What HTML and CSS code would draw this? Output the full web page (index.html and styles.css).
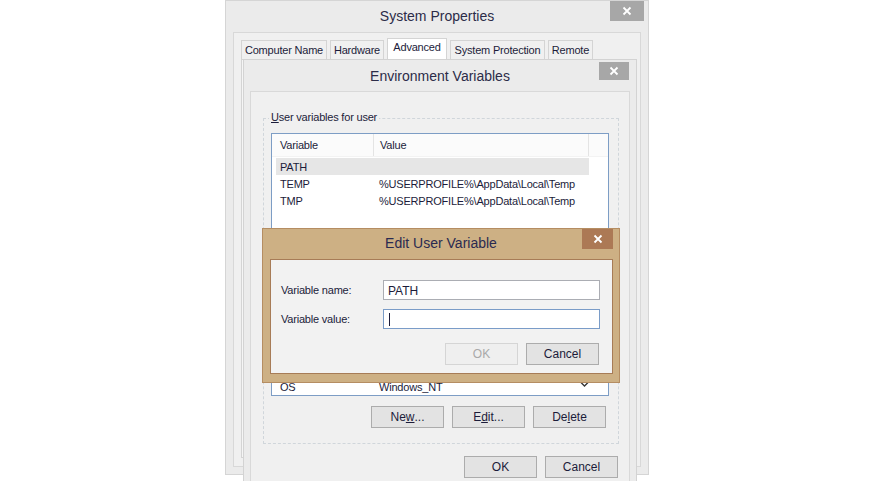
FILE: index.html
```html
<!DOCTYPE html>
<html>
<head>
<meta charset="utf-8">
<link rel="stylesheet" href="styles.css">
</head>
<body>
<div class="desktop">
  <div class="win sys">
    <div class="titlebar">
      <span></span>
      <span class="title">System Properties</span>
      <span class="close gray"><svg width="10" height="10" viewBox="0 0 10 10"><path d="M1.5 1.5L8.5 8.5M8.5 1.5L1.5 8.5" stroke="#fff" stroke-width="1.8"/></svg></span>
    </div>
    <div class="sys-client">
      <div class="tabs">
        <span class="tab t1">Computer Name</span>
        <span class="tab t2">Hardware</span>
        <span class="tab t3 active">Advanced</span>
        <span class="tab t4">System Protection</span>
        <span class="tab t5">Remote</span>
      </div>
      <div class="tabpanel"></div>
    </div>
  </div>

  <div class="win env">
    <div class="titlebar env-title">
      <span></span>
      <span class="title">Environment Variables</span>
      <span class="close gray env-close"><svg width="10" height="10" viewBox="0 0 10 10"><path d="M1.5 1.5L8.5 8.5M8.5 1.5L1.5 8.5" stroke="#fff" stroke-width="1.8"/></svg></span>
    </div>
    <div class="env-client">
      <div class="group">
        <span class="legend"><u>U</u>ser variables for user</span>
        <div class="list">
          <div class="list-head">
            <span class="col1">Variable</span>
            <span class="col2">Value</span>
            <span class="col3"></span>
          </div>
          <div class="row sel"><span class="c1">PATH</span><span class="c2"></span></div>
          <div class="row"><span class="c1">TEMP</span><span class="c2">%USERPROFILE%\AppData\Local\Temp</span></div>
          <div class="row"><span class="c1">TMP</span><span class="c2">%USERPROFILE%\AppData\Local\Temp</span></div>
          <div class="list-fill"></div>
          <div class="row"><span class="c1">OS</span><span class="c2">Windows_NT</span><span class="arrow"><svg width="9" height="7" viewBox="0 0 9 7"><path d="M1 1.5L4.5 5L8 1.5" fill="none" stroke="#333" stroke-width="1.3"/></svg></span></div>
        </div>
        <div class="btnrow">
          <span class="btn">Ne<u>w</u>...</span>
          <span class="btn">E<u>d</u>it...</span>
          <span class="btn">De<u>l</u>ete</span>
        </div>
      </div>
      <div class="btnrow bottom">
        <span class="btn">OK</span>
        <span class="btn">Cancel</span>
      </div>
    </div>
  </div>

  <div class="win edit">
    <div class="titlebar edit-title">
      <span></span>
      <span class="title">Edit User Variable</span>
      <span class="close brown"><svg width="10" height="10" viewBox="0 0 10 10"><path d="M1.5 1.5L8.5 8.5M8.5 1.5L1.5 8.5" stroke="#fff" stroke-width="1.8"/></svg></span>
    </div>
    <div class="edit-client">
      <div class="field">
        <span class="flabel">Variable name:</span>
        <span class="input">PATH</span>
      </div>
      <div class="field">
        <span class="flabel">Variable value:</span>
        <span class="input focus"><span class="caret"></span></span>
      </div>
      <div class="btnrow edit-btns">
        <span class="btn disabled">OK</span>
        <span class="btn">Cancel</span>
      </div>
    </div>
  </div>
</div>
</body>
</html>
```
FILE: styles.css
```css
* { box-sizing: border-box; }
html, body { margin: 0; padding: 0; background: #ffffff; }
body {
  font-family: "Liberation Sans", Arial, sans-serif;
  font-size: 11px;
  letter-spacing: -0.2px;
  color: #1c1c3a;
}
.desktop {
  position: relative;
  width: 874px;
  height: 481px;
  overflow: hidden;
  background: #ffffff;
}
.win { position: absolute; }
.titlebar {
  display: grid;
  grid-template-columns: 1fr auto 1fr;
  align-items: start;
}
.title {
  font-size: 14px;
  letter-spacing: 0;
  color: #2c2c48;
  white-space: nowrap;
}
.close {
  justify-self: end;
  display: flex;
  align-items: center;
  justify-content: center;
}
.gray { background: #a7a7a7; }
.brown { background: #ac7955; }

/* System Properties */
.sys {
  left: 225px;
  top: 0;
  width: 424px;
  height: 475px;
  background: #ebebeb;
  border: 1px solid #d5d5d5;
  display: flex;
  flex-direction: column;
}
.sys .titlebar { height: 31px; }
.sys .title { padding-top: 7px; }
.sys .close { width: 34px; height: 20px; margin-right: 4px; }
.sys-client {
  flex: 1;
  margin: 0 7px 7px 7px;
  background: #f0f0f0;
  border: 1px solid #d8d8d8;
  padding: 6px 7px 0 7px;
  display: flex;
  flex-direction: column;
}
.tabs {
  display: flex;
  align-items: flex-end;
  gap: 3px;
  height: 20px;
}
.tab {
  height: 19px;
  padding-top: 3px;
  border: 1px solid #d4d4d4;
  border-bottom: none;
  background: #f0f0f0;
  white-space: nowrap;
  text-align: center;
}
.t1 { width: 86px; }
.t2 { width: 54px; }
.t3 { width: 60px; }
.t4 { width: 95px; }
.t5 { width: 45px; }
.tab.active {
  height: 21px;
  padding-top: 2px;
  background: #ffffff;
}
.tabpanel {
  flex: 1;
  margin-bottom: 8px;
  border: 1px solid #d4d4d4;
  background: #f5f5f5;
}

/* Environment Variables */
.env {
  left: 243px;
  top: 59px;
  width: 394px;
  height: 440px;
  background: #ebebeb;
  border: 1px solid #d3d3d3;
  display: flex;
  flex-direction: column;
}
.env-title { height: 31px; }
.env-title .title { padding-top: 8px; }
.env-close { width: 30px; height: 18px; margin-top: 2px; margin-right: 7px; }
.env-client {
  flex: 1;
  margin: 0 6px;
  background: #f0f0f0;
  border: 1px solid #d9d9d9;
  padding: 26px 10px 0 12px;
  display: flex;
  flex-direction: column;
}
.group {
  position: relative;
  border: 1px dashed #d0d6db;
  height: 326px;
  padding: 14px 10px 0 7px;
  display: flex;
  flex-direction: column;
}
.legend {
  position: absolute;
  left: 5px;
  top: -8px;
  padding: 0 2px;
  background: #f0f0f0;
}
.legend u { text-decoration-thickness: 1px; }
.list {
  width: 338px;
  height: 263px;
  border: 1px solid #7d9dc5;
  background: #ffffff;
  display: flex;
  flex-direction: column;
}
.list-head {
  display: flex;
  height: 23px;
  border-bottom: 1px solid #f3f3f3;
  background: #fbfbfb;
}
.list-head span {
  padding: 5px 0 0 8px;
  border-right: 1px solid #e4e4e4;
}
.col1 { width: 102px; }
.col2 { width: 215px; padding-left: 6px !important; }
.col3 { flex: 1; border-right: none !important; }
.row {
  display: flex;
  height: 17px;
  align-items: center;
  margin-left: 4px;
  width: 313px;
}
.list-head + .row { margin-top: 1px; }
.row.sel { background: #e6e6e6; }
.c1 { width: 98px; padding-left: 4px; }
.c2 { flex: 1; padding-left: 5px; white-space: nowrap; }
.arrow {
  display: flex;
  margin-left: 20px;
  margin-top: -4px;
}
.list-fill { flex: 1; }
.btnrow {
  display: flex;
  justify-content: flex-end;
  gap: 8px;
  margin-top: 10px;
  padding-right: 2px;
}
.btn {
  width: 73px;
  height: 22px;
  border: 1px solid #acacac;
  background: #e3e3e3;
  display: flex;
  align-items: center;
  justify-content: center;
  font-size: 12px;
  letter-spacing: 0;
  color: #1c1c3a;
}
.btn u { text-decoration-thickness: 1px; }
.bottom { margin-top: 12px; padding-right: 1px; }

/* Edit User Variable */
.edit {
  left: 262px;
  top: 228px;
  width: 358px;
  height: 155px;
  background: #cdb084;
  border: 1px solid #b58d62;
  display: flex;
  flex-direction: column;
}
.edit-title { height: 30px; }
.edit-title .title { padding-top: 6px; color: #2a2a50; }
.edit .close { width: 31px; height: 20px; margin-right: 6px; }
.edit-client {
  flex: 1;
  margin: 0 6px 8px 7px;
  background: #f2f2f2;
  border: 1px solid #a77c57;
  padding: 20px 11px 0 10px;
  display: flex;
  flex-direction: column;
  gap: 9px;
}
.field {
  display: flex;
  align-items: center;
  height: 20px;
}
.flabel { width: 102px; }
.input {
  width: 217px;
  height: 20px;
  border: 1px solid #abadb3;
  background: #ffffff;
  padding: 3px 0 0 4px;
  font-size: 12px;
  letter-spacing: 0;
  display: flex;
  align-items: flex-start;
}
.input.focus { border-color: #7a9cc8; padding-top: 3px; }
.caret {
  display: block;
  width: 1px;
  height: 13px;
  margin-left: 1px;
  background: #1c1c3a;
}
.edit-btns { margin-top: 5px; padding-right: 2px; }
.btn.disabled {
  background: #efefef;
  border-color: #d5d5d5;
  color: #a9a9a9;
}
```
